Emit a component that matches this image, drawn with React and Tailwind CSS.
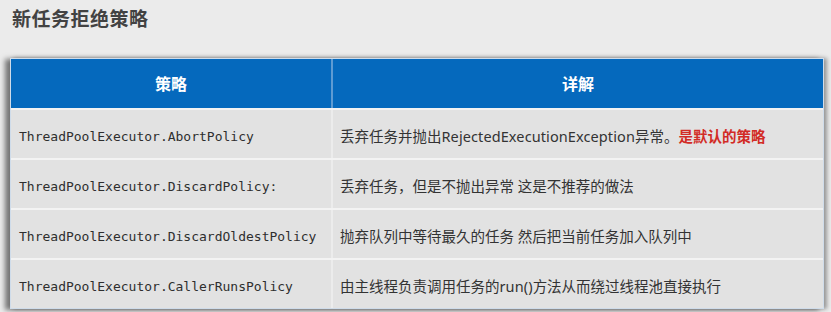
import React from "react";

const rows = [
  {
    name: "ThreadPoolExecutor.AbortPolicy",
    desc: ["丢弃任务并抛出", "RejectedExecutionException", "异常。"],
    note: "是默认的策略",
  },
  {
    name: "ThreadPoolExecutor.DiscardPolicy:",
    desc: ["丢弃任务，但是不抛出异常 这是不推荐的做法"],
  },
  {
    name: "ThreadPoolExecutor.DiscardOldestPolicy",
    desc: ["抛弃队列中等待最久的任务 然后把当前任务加入队列中"],
  },
  {
    name: "ThreadPoolExecutor.CallerRunsPolicy",
    desc: ["由主线程负责调用任务的", "run()", "方法从而绕过线程池直接执行"],
  },
];

const cjk = "font-['Noto_Sans','Noto_Sans_CJK_SC',sans-serif]";

export default function App() {
  return (
    <div className="w-[831px] h-[312px] bg-[#ebebeb] overflow-hidden">
      {/* Title */}
      <h1
        className={`${cjk} pl-[12px] pt-[5px] h-[58px] text-[19px] font-bold text-[#424242] tracking-[0.5px]`}
      >
        新任务拒绝策略
      </h1>

      {/* Table */}
      <div className="ml-[10px] w-[814px] border border-[#cfdcea] shadow-[-5px_1px_5px_rgba(0,0,0,0.5),3px_0_4px_rgba(0,0,0,0.35)]">
        <div className="flex h-[49px] bg-[#0569bd] text-white font-bold text-[16px]">
          <div
            className={`${cjk} w-[322px] flex items-center justify-center border-r-2 border-[#5e9bd3]`}
          >
            策略
          </div>
          <div className={`${cjk} flex-1 flex items-center justify-center`}>
            详解
          </div>
        </div>

        {rows.map((row, i) => (
          <div
            key={i}
            className="flex h-[50px] bg-[#e2e2e2] border-t-2 border-[#f3f3f3] text-[#333]"
          >
            <div className="w-[322px] flex items-center pl-[8px] pt-[5px] border-r-2 border-[#ececec] font-['DejaVu_Sans_Mono',monospace] text-[13px] text-[#2e2e2e]">
              {row.name}
            </div>
            <div className={`${cjk} flex-1 flex items-center pl-[7px] pt-[5px] text-[14.5px] whitespace-pre`}>
              {row.desc.map((part, j) =>
                /[A-Za-z]/.test(part) ? (
                  <span key={j} className="tracking-[0.1px]">
                    {part}
                  </span>
                ) : (
                  <span key={j}>{part}</span>
                )
              )}
              {row.note && (
                <span className="font-bold text-[#d22b26]">{row.note}</span>
              )}
            </div>
          </div>
        ))}
      </div>
    </div>
  );
}
